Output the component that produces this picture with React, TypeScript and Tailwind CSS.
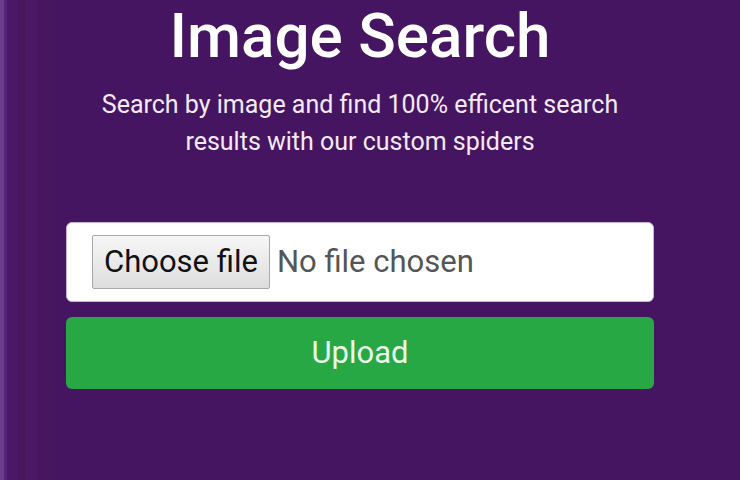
import React from 'react';

export default function App() {
  return (
    <div
      className="w-[740px] h-[480px] overflow-hidden bg-[#461561] flex"
      style={{ fontFamily: 'Roboto, "Noto Sans", sans-serif' }}
    >
      {/* left edge stripes */}
      <div className="w-[4px] h-full bg-[#6a3d8c]" />
      <div className="w-[3px] h-full bg-[#55237a]" />
      <div className="w-[10px] h-full bg-[#4a1866]" />
      <div className="w-[8px] h-full bg-[#47165f]" />
      <div className="w-[12px] h-full bg-[#4a1865]" />
      <div className="w-[18px] h-full bg-[#47165f]" />
      <div className="w-[588px] ml-[11px] flex flex-col items-center">
        <h1 className="mt-[1px] text-[62px] leading-[70px] font-medium text-white">
          Image Search
        </h1>
        <p className="mt-[15px] w-[530px] text-center text-[25px] leading-[37px] text-[#f3eaf8]">
          Search by image and find 100% efficent search results with our custom spiders
        </p>
        <div className="mt-[62px] w-full h-[80px] bg-white rounded-[6px] border border-[#c9b4d6] flex items-center pl-[25px]">
          <span className="h-[54px] px-[11px] flex items-center border border-[#a9a9a9] rounded-[2px] bg-gradient-to-b from-[#f6f6f6] to-[#dedede] text-[31px] text-[#111]">
            Choose file
          </span>
          <span className="ml-[7px] text-[31px] text-[#555]">No file chosen</span>
        </div>
        <button className="mt-[15px] w-full h-[72px] bg-[#28a745] rounded-[6px] text-[31px] text-[#e9fbe9]">
          Upload
        </button>
      </div>
    </div>
  );
}
